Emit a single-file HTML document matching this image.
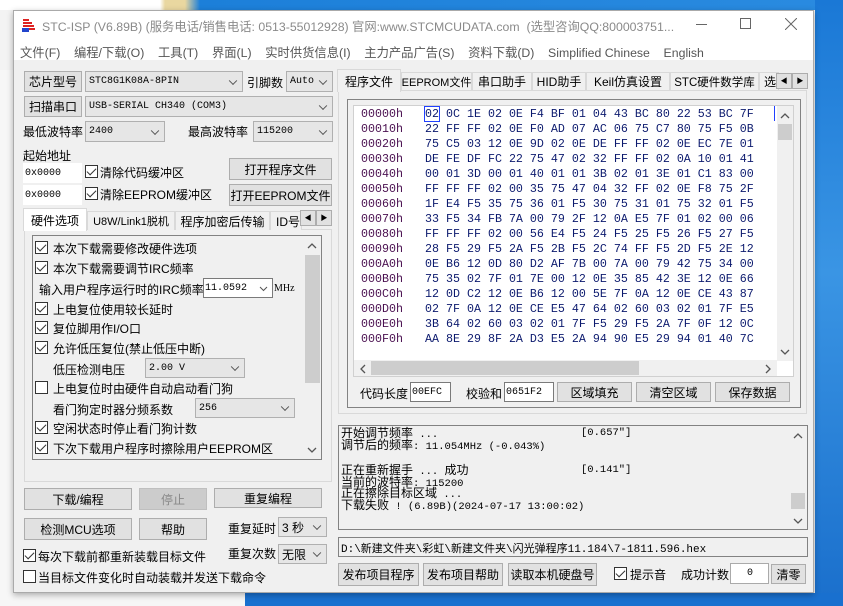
<!DOCTYPE html>
<html><head><meta charset="utf-8"><style>
*{box-sizing:border-box;margin:0;padding:0}
body{width:843px;height:606px;position:relative;overflow:hidden;background:#f3f3f3;font-family:"Liberation Sans","Noto Sans CJK SC",sans-serif;font-size:12px;color:#000}
.a{position:absolute;white-space:nowrap}
.btn{position:absolute;background:#e1e1e1;border:1px solid #adadad;text-align:center;font-size:12px;display:flex;align-items:center;justify-content:center;white-space:nowrap;overflow:hidden}
.cb{position:absolute;background:#e6e6e6;border:1px solid #b0b0b0;font-size:10px;padding-left:3px;display:flex;align-items:center;font-family:"Liberation Mono","Noto Sans CJK SC",monospace;white-space:nowrap}
.cb:after{content:"";position:absolute;right:6px;top:50%;width:5px;height:5px;border-right:1px solid #555;border-bottom:1px solid #555;transform:translateY(-70%) rotate(45deg)}
.inp{position:absolute;background:#fff;border:1px solid #7a7a7a;font-family:"Liberation Mono",monospace;font-size:10px;display:flex;align-items:center;padding-left:1px}
.chk{position:absolute;width:13px;height:13px;border:1px solid #333;background:#fff}
.chk.on:after{content:"";position:absolute;left:3px;top:0px;width:4px;height:8px;border-right:1.5px solid #333;border-bottom:1.5px solid #333;transform:rotate(45deg)}
.tab{position:absolute;border:1px solid #d9d9d9;border-bottom:none;background:#f0f0f0;font-size:12px;display:flex;align-items:center;justify-content:center;white-space:nowrap;overflow:hidden}
.hex{position:absolute;font-family:"Liberation Mono",monospace;font-size:11.67px;white-space:pre;line-height:15px}
.lg{position:absolute;font-family:"Liberation Mono",monospace;font-size:10.5px;line-height:12px;height:12px;white-space:pre}
.lg b{font-weight:normal;font-family:"Noto Sans CJK SC",sans-serif;font-size:12px;line-height:12px}
.l{position:absolute;white-space:nowrap;font-size:12px}
</style></head><body>
<div class="a" style="left:0;top:0;width:843px;height:10px;background:linear-gradient(90deg,#fff 0,#fff 160px,#e9d7a0 165px,#e9d7a0 185px,#1c7fd9 200px,#2a8be0 100%)"></div>
<div class="a" style="left:815px;top:0;width:28px;height:606px;background:linear-gradient(180deg,#1a78d6,#3a95e4 45%,#1a6fcc)"></div>
<div class="a" style="left:245px;top:593px;width:598px;height:13px;background:#1970cf"></div>
<div class="a" style="left:0;top:593px;width:245px;height:13px;background:#f6f6f6"></div>
<div class="a" style="left:0;top:70px;width:13px;height:530px;background:#f7f7f7"></div>
<div class="a" style="left:13px;top:10px;width:801px;height:583px;background:#f0f0f0;border:1px solid #aaa;box-shadow:0 2px 6px rgba(0,0,0,.3)"></div>
<div class="a" style="left:14px;top:11px;width:799px;height:49px;background:#fff"></div>
<svg class="a" style="left:21px;top:17px" width="16" height="16"><path d="M2 3h6M2 6h9M2 9h11M2 12h12" stroke="#d22" stroke-width="2"/><rect x="1" y="11" width="7" height="4" fill="#2244cc"/></svg>
<div class="a" style="left:42px;top:17px;font-size:12.3px;color:#8a8a8a">STC-ISP (V6.89B) (服务电话/销售电话: 0513-55012928) 官网:www.STCMCUDATA.com&nbsp; (选型咨询QQ:800003751...</div>
<div class="a" style="left:696px;top:24px;width:11px;height:1px;background:#666"></div>
<div class="a" style="left:740px;top:18px;width:11px;height:11px;border:1px solid #666"></div>
<svg class="a" style="left:785px;top:18px" width="12" height="12"><path d="M0 0L12 12M12 0L0 12" stroke="#666"/></svg>
<div class="a" style="left:20px;top:43px;font-size:12.3px;color:#555">文件(F)&nbsp;&nbsp;&nbsp; 编程/下载(O)&nbsp;&nbsp;&nbsp; 工具(T)&nbsp;&nbsp;&nbsp; 界面(L)&nbsp;&nbsp;&nbsp; 实时供货信息(I)&nbsp;&nbsp;&nbsp; 主力产品广告(S)&nbsp;&nbsp;&nbsp; 资料下载(D)&nbsp;&nbsp;&nbsp; Simplified Chinese&nbsp;&nbsp;&nbsp; English</div>

<div class="btn" style="left:24px;top:71px;width:58px;height:21px">芯片型号</div>
<div class="cb" style="left:85px;top:71px;width:158px;height:21px">STC8G1K08A-8PIN</div>
<div class="l" style="left:247px;top:74px">引脚数</div>
<div class="cb" style="left:286px;top:71px;width:47px;height:21px">Auto</div>
<div class="btn" style="left:24px;top:96px;width:58px;height:21px">扫描串口</div>
<div class="cb" style="left:85px;top:96px;width:248px;height:21px">USB-SERIAL CH340 (COM3)</div>
<div class="l" style="left:23px;top:123px">最低波特率</div>
<div class="cb" style="left:85px;top:121px;width:80px;height:21px">2400</div>
<div class="l" style="left:188px;top:123px">最高波特率</div>
<div class="cb" style="left:253px;top:121px;width:80px;height:21px">115200</div>
<div class="l" style="left:23px;top:147px">起始地址</div>
<div class="inp" style="left:23px;top:163px;width:59px;height:20px;border-color:#fff">0x0000</div>
<div class="chk on" style="left:85px;top:165px"></div>
<div class="l" style="left:100px;top:164px">清除代码缓冲区</div>
<div class="btn" style="left:229px;top:158px;width:103px;height:22px">打开程序文件</div>
<div class="inp" style="left:23px;top:185px;width:59px;height:20px;border-color:#fff">0x0000</div>
<div class="chk on" style="left:85px;top:187px"></div>
<div class="l" style="left:100px;top:186px">清除EEPROM缓冲区</div>
<div class="btn" style="left:229px;top:184px;width:103px;height:22px">打开EEPROM文件</div>

<div class="a" style="left:24px;top:229px;width:308px;height:253px;border:1px solid #d9d9d9;background:#fff"></div>
<div class="a" style="left:25px;top:230px;width:306px;height:251px;background:#f0f0f0"></div>
<div class="tab" style="left:23px;top:208px;width:64px;height:23px;background:#fff">硬件选项</div>
<div class="tab" style="left:87px;top:211px;width:88px;height:19px;font-size:11px">U8W/Link1脱机</div>
<div class="tab" style="left:175px;top:211px;width:95px;height:19px">程序加密后传输</div>
<div class="tab" style="left:270px;top:211px;width:32px;height:19px;justify-content:flex-start;padding-left:5px">ID号</div>
<div class="btn" style="left:300px;top:210px;width:16px;height:16px;font-size:7px">◀</div>
<div class="btn" style="left:316px;top:210px;width:16px;height:16px;font-size:7px">▶</div>
<div class="a" style="left:32px;top:235px;width:290px;height:225px;border:1px solid #828282;background:#f0f0f0"></div>
<div class="a" style="left:305px;top:255px;width:15px;height:128px;background:#cdcdcd"></div>
<svg class="a" style="left:307px;top:243px" width="10" height="6"><path d="M1 5L5 1L9 5" stroke="#555" fill="none" stroke-width="1.3"/></svg>
<svg class="a" style="left:307px;top:447px" width="10" height="6"><path d="M1 1L5 5L9 1" stroke="#555" fill="none" stroke-width="1.3"/></svg>

<div class="chk on" style="left:35px;top:241px"></div><div class="l" style="left:53px;top:240px">本次下载需要修改硬件选项</div>
<div class="chk on" style="left:35px;top:261px"></div><div class="l" style="left:53px;top:260px">本次下载需要调节IRC频率</div>
<div class="l" style="left:39px;top:281px">输入用户程序运行时的IRC频率</div>
<div class="inp" style="left:203px;top:278px;width:70px;height:20px">11.0592</div>
<svg class="a" style="left:259px;top:286px" width="9" height="6"><path d="M1 1L4.5 4.5L8 1" stroke="#555" fill="none"/></svg>
<div class="a" style="left:274px;top:283px;font-size:10px;font-family:'Liberation Serif',serif">MHz</div>
<div class="chk on" style="left:35px;top:302px"></div><div class="l" style="left:53px;top:301px">上电复位使用较长延时</div>
<div class="chk on" style="left:35px;top:321px"></div><div class="l" style="left:53px;top:320px">复位脚用作I/O口</div>
<div class="chk on" style="left:35px;top:341px"></div><div class="l" style="left:53px;top:340px">允许低压复位(禁止低压中断)</div>
<div class="l" style="left:53px;top:361px">低压检测电压</div>
<div class="cb" style="left:145px;top:358px;width:100px;height:20px">2.00 V</div>
<div class="chk" style="left:35px;top:381px"></div><div class="l" style="left:53px;top:380px">上电复位时由硬件自动启动看门狗</div>
<div class="l" style="left:53px;top:401px">看门狗定时器分频系数</div>
<div class="cb" style="left:195px;top:398px;width:100px;height:20px">256</div>
<div class="chk on" style="left:35px;top:421px"></div><div class="l" style="left:53px;top:420px">空闲状态时停止看门狗计数</div>
<div class="chk on" style="left:35px;top:441px"></div><div class="l" style="left:53px;top:440px">下次下载用户程序时擦除用户EEPROM区</div>

<div class="btn" style="left:24px;top:488px;width:108px;height:22px">下载/编程</div>
<div class="btn" style="left:139px;top:488px;width:68px;height:22px;background:#cccccc;border-color:#bfbfbf;color:#888">停止</div>
<div class="btn" style="left:214px;top:488px;width:108px;height:20px">重复编程</div>
<div class="btn" style="left:24px;top:518px;width:108px;height:22px">检测MCU选项</div>
<div class="btn" style="left:139px;top:518px;width:68px;height:22px">帮助</div>
<div class="l" style="left:228px;top:520px">重复延时</div>
<div class="cb" style="left:278px;top:517px;width:49px;height:20px;font-family:'Liberation Sans','Noto Sans CJK SC',sans-serif;font-size:12px">3 秒</div>
<div class="l" style="left:228px;top:545px">重复次数</div>
<div class="cb" style="left:278px;top:544px;width:49px;height:20px;font-family:'Liberation Sans','Noto Sans CJK SC',sans-serif;font-size:12px">无限</div>
<div class="chk on" style="left:23px;top:549px"></div><div class="l" style="left:38px;top:548px">每次下载前都重新装载目标文件</div>
<div class="chk" style="left:23px;top:570px"></div><div class="l" style="left:38px;top:569px">当目标文件变化时自动装载并发送下载命令</div>

<div class="a" style="left:338px;top:90px;width:469px;height:324px;border:1px solid #d9d9d9;background:#fff"></div>
<div class="a" style="left:339px;top:91px;width:467px;height:322px;background:#f0f0f0"></div>
<div class="tab" style="left:337px;top:69px;width:64px;height:23px;background:#f0f0f0">程序文件</div>
<div class="tab" style="left:401px;top:72px;width:71px;height:18px;font-size:11px">EEPROM文件</div>
<div class="tab" style="left:472px;top:72px;width:60px;height:18px">串口助手</div>
<div class="tab" style="left:532px;top:72px;width:54px;height:18px">HID助手</div>
<div class="tab" style="left:586px;top:72px;width:84px;height:18px">Keil仿真设置</div>
<div class="tab" style="left:670px;top:72px;width:89px;height:18px;font-size:11.5px">STC硬件数学库</div>
<div class="tab" style="left:759px;top:72px;width:20px;height:18px;justify-content:flex-start;padding-left:4px">选</div>
<div class="btn" style="left:776px;top:73px;width:16px;height:16px;font-size:7px">◀</div>
<div class="btn" style="left:792px;top:73px;width:16px;height:16px;font-size:7px">▶</div>
<div class="a" style="left:347px;top:99px;width:454px;height:309px;border:1px solid #828282"></div>
<div class="a" style="left:353px;top:105px;width:441px;height:272px;background:#fff;border:1px solid #d0d0d0"></div>
<div class="a" style="left:777px;top:106px;width:16px;height:255px;background:#f0f0f0"></div>
<div class="a" style="left:778px;top:124px;width:14px;height:16px;background:#cdcdcd"></div>
<svg class="a" style="left:780px;top:113px" width="10" height="6"><path d="M1 5L5 1L9 5" stroke="#555" fill="none" stroke-width="1.3"/></svg>
<svg class="a" style="left:780px;top:349px" width="10" height="6"><path d="M1 1L5 5L9 1" stroke="#555" fill="none" stroke-width="1.3"/></svg>
<div class="a" style="left:354px;top:360px;width:423px;height:16px;background:#f0f0f0"></div>
<div class="a" style="left:371px;top:361px;width:268px;height:14px;background:#cdcdcd"></div>
<svg class="a" style="left:360px;top:364px" width="6" height="10"><path d="M5 1L1 5L5 9" stroke="#555" fill="none" stroke-width="1.3"/></svg>
<svg class="a" style="left:765px;top:364px" width="6" height="10"><path d="M1 1L5 5L1 9" stroke="#555" fill="none" stroke-width="1.3"/></svg>
<div class="hex" style="left:361px;top:107px;color:#4a1050">00000h
00010h
00020h
00030h
00040h
00050h
00060h
00070h
00080h
00090h
000A0h
000B0h
000C0h
000D0h
000E0h
000F0h</div>
<div class="hex" style="left:425px;top:107px;color:#0c1a6e">02 0C 1E 02 0E F4 BF 01 04 43 BC 80 22 53 BC 7F
22 FF FF 02 0E F0 AD 07 AC 06 75 C7 80 75 F5 0B
75 C5 03 12 0E 9D 02 0E DE FF FF 02 0E EC 7E 01
DE FE DF FC 22 75 47 02 32 FF FF 02 0A 10 01 41
00 01 3D 00 01 40 01 01 3B 02 01 3E 01 C1 83 00
FF FF FF 02 00 35 75 47 04 32 FF 02 0E F8 75 2F
1F E4 F5 35 75 36 01 F5 30 75 31 01 75 32 01 F5
33 F5 34 FB 7A 00 79 2F 12 0A E5 7F 01 02 00 06
FF FF FF 02 00 56 E4 F5 24 F5 25 F5 26 F5 27 F5
28 F5 29 F5 2A F5 2B F5 2C 74 FF F5 2D F5 2E 12
0E B6 12 0D 80 D2 AF 7B 00 7A 00 79 42 75 34 00
75 35 02 7F 01 7E 00 12 0E 35 85 42 3E 12 0E 66
12 0D C2 12 0E B6 12 00 5E 7F 0A 12 0E CE 43 87
02 7F 0A 12 0E CE E5 47 64 02 60 03 02 01 7F E5
3B 64 02 60 03 02 01 7F F5 29 F5 2A 7F 0F 12 0C
AA 8E 29 8F 2A D3 E5 2A 94 90 E5 29 94 01 40 7C</div>
<div class="a" style="left:424px;top:106px;width:16px;height:16px;border:1px solid #2040ff"></div>
<div class="a" style="left:774px;top:106px;width:2px;height:15px;border-left:1px solid #2040ff"></div>
<div class="l" style="left:360px;top:385px">代码长度</div>
<div class="inp" style="left:410px;top:382px;width:41px;height:20px">00EFC</div>
<div class="l" style="left:466px;top:385px">校验和</div>
<div class="inp" style="left:504px;top:382px;width:50px;height:20px">0651F2</div>
<div class="btn" style="left:557px;top:382px;width:75px;height:20px">区域填充</div>
<div class="btn" style="left:636px;top:382px;width:75px;height:20px">清空区域</div>
<div class="btn" style="left:715px;top:382px;width:75px;height:20px">保存数据</div>

<div class="a" style="left:338px;top:425px;width:470px;height:105px;border:1px solid #828282;background:#f0f0f0"></div>
<div class="a" style="left:791px;top:493px;width:14px;height:16px;background:#cdcdcd"></div>
<svg class="a" style="left:793px;top:433px" width="10" height="6"><path d="M1 5L5 1L9 5" stroke="#555" fill="none" stroke-width="1.3"/></svg>
<svg class="a" style="left:793px;top:518px" width="10" height="6"><path d="M1 1L5 5L9 1" stroke="#555" fill="none" stroke-width="1.3"/></svg>
<div class="lg" style="left:341px;top:427px"><b>开始调节频率</b> ...</div>
<div class="lg" style="left:341px;top:439px"><b>调节后的频率</b>: 11.054MHz (-0.043%)</div>
<div class="lg" style="left:341px;top:464px"><b>正在重新握手</b> ... <b>成功</b></div>
<div class="lg" style="left:341px;top:476px"><b>当前的波特率</b>: 115200</div>
<div class="lg" style="left:341px;top:487px"><b>正在擦除目标区域</b> ...</div>
<div class="lg" style="left:341px;top:499px"><b>下载失败</b> ! (6.89B)(2024-07-17 13:00:02)</div>
<div class="lg" style="left:581px;top:427px">[0.657″]</div>
<div class="lg" style="left:581px;top:464px">[0.141″]</div>
<div class="a" style="left:338px;top:537px;width:470px;height:20px;border:1px solid #828282;background:#f0f0f0"></div>
<div class="a" style="left:341px;top:540px;font-family:'Liberation Mono','Noto Sans CJK SC',monospace;font-size:11px">D:\新建文件夹\彩虹\新建文件夹\闪光弹程序11.184\7-1811.596.hex</div>
<div class="btn" style="left:338px;top:563px;width:81px;height:23px">发布项目程序</div>
<div class="btn" style="left:423px;top:563px;width:80px;height:23px">发布项目帮助</div>
<div class="btn" style="left:508px;top:563px;width:89px;height:23px">读取本机硬盘号</div>
<div class="chk on" style="left:614px;top:567px"></div>
<div class="l" style="left:630px;top:566px">提示音</div>
<div class="l" style="left:681px;top:566px">成功计数</div>
<div class="inp" style="left:730px;top:563px;width:39px;height:21px;justify-content:center;border-color:#aaa">0</div>
<div class="btn" style="left:771px;top:564px;width:35px;height:20px">清零</div>
</body></html>
